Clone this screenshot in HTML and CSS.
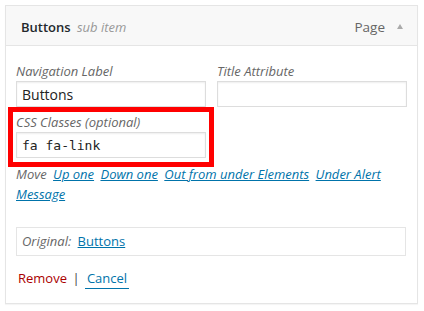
FILE: index.html
```html
<!DOCTYPE html>
<html lang="en">

<head>
    <meta charset="UTF-8">
    <meta name="viewport" content="width=device-width, initial-scale=1.0">
    <title>Menu item</title>
    <link rel="stylesheet" href="styles.css">
</head>

<body>
    <div class="menu-item">
        <div class="item-handle">
            <span class="item-title">Buttons <span class="sub-item">sub item</span></span>
            <span class="item-controls">
                <span class="item-type">Page</span>
                <span class="item-edit"></span>
            </span>
        </div>
        <div class="item-settings">
            <div class="field-row">
                <label class="field">
                    <span class="field-label">Navigation Label</span>
                    <input class="field-input" type="text" value="Buttons">
                </label>
                <label class="field">
                    <span class="field-label">Title Attribute</span>
                    <input class="field-input" type="text" value="">
                </label>
            </div>
            <label class="field field-css">
                <span class="field-label">CSS Classes (optional)</span>
                <input class="field-input mono" type="text" value="fa fa-link">
            </label>
            <p class="field-move">
                <span class="move-label">Move</span> <a href="#">Up one</a> <a href="#">Down one</a> <a href="#">Out from under Elements</a> <a href="#">Under Alert Message</a>
            </p>
            <div class="original">
                <span class="original-label">Original:</span> <a href="#">Buttons</a>
            </div>
            <div class="actions">
                <a class="remove" href="#">Remove</a>
                <span class="sep">|</span>
                <a class="cancel" href="#">Cancel</a>
            </div>
        </div>
    </div>
</body>

</html>
```

FILE: styles.css
```css
body {
    margin: 0;
    padding: 5px;
    font-family: "Open Sans", "Liberation Sans", sans-serif;
    font-size: 13px;
    line-height: 20px;
    color: #444;
    background: #fff;
}

.menu-item {
    width: 413px;
    box-sizing: border-box;
    border: 1px solid #e5e5e5;
    box-shadow: 0 1px 1px rgba(0, 0, 0, .04);
}

.item-handle {
    display: flex;
    justify-content: space-between;
    align-items: center;
    height: 39px;
    padding: 0 10px 0 15px;
    background-color: #f8f8f8;
    border-bottom: 1px solid #e5e5e5;
}

.item-title {
    padding-top: 2px;
    font-weight: 600;
    color: #23282d;
}

.item-title .sub-item {
    margin-left: 3px;
    font-weight: 400;
    font-style: italic;
    color: #999;
}

.item-controls {
    display: flex;
    align-items: center;
    padding-top: 2px;
}

.item-type {
    color: #666;
    font-size: 13.5px;
}

.item-edit {
    width: 0;
    height: 0;
    margin: 0 4px 0 12px;
    border-left: 3.5px solid transparent;
    border-right: 3.5px solid transparent;
    border-bottom: 5px solid #aaa;
}

.item-settings {
    padding: 15px 10px 15px 10px;
}

.field-row {
    display: flex;
    gap: 11px;
}

.field {
    display: block;
    width: 190px;
    margin-bottom: 5px;
}

.field-label {
    display: block;
    font-style: italic;
    color: #666;
}

.field-input {
    display: block;
    width: 190px;
    height: 26px;
    box-sizing: border-box;
    margin: 0;
    padding: 2px 5px;
    border: 1px solid #ddd;
    box-shadow: inset 0 1px 2px rgba(0, 0, 0, .07);
    font-family: "Open Sans", "Liberation Sans", sans-serif;
    font-size: 14px;
    color: #222;
    outline: none;
}

.field-input.mono {
    font-family: "DejaVu Sans Mono", "Liberation Mono", monospace;
    font-size: 13px;
}

.field-css {
    position: relative;
}

/* red highlight drawn over the field */
.field-css::after {
    content: '';
    position: absolute;
    left: -8px;
    top: -5px;
    right: -8px;
    bottom: -9px;
    border: 5px solid #f00;
}

.field-move {
    margin: 0;
    padding-top: 1px;
    font-style: italic;
    color: #666;
}

.field-move a {
    margin-left: 3px;
}

a {
    color: #0073aa;
    text-decoration: underline;
}

.original {
    margin-top: 23px;
    padding: 3px 5px 4px;
    border: 1px solid #e5e5e5;
    width: 390px;
    box-sizing: border-box;
}

.original-label {
    font-style: italic;
    color: #666;
    margin-right: 3px;
}

.actions {
    margin-top: 12px;
    padding-left: 2px;
}

.actions .remove {
    color: #a00;
    text-decoration: none;
}

.actions .sep {
    margin: 0 2px;
    color: #444;
}

.actions .cancel {
    padding: 0 2px 1px;
    text-decoration: none;
    border-bottom: 1px solid #0073aa;
}
```
